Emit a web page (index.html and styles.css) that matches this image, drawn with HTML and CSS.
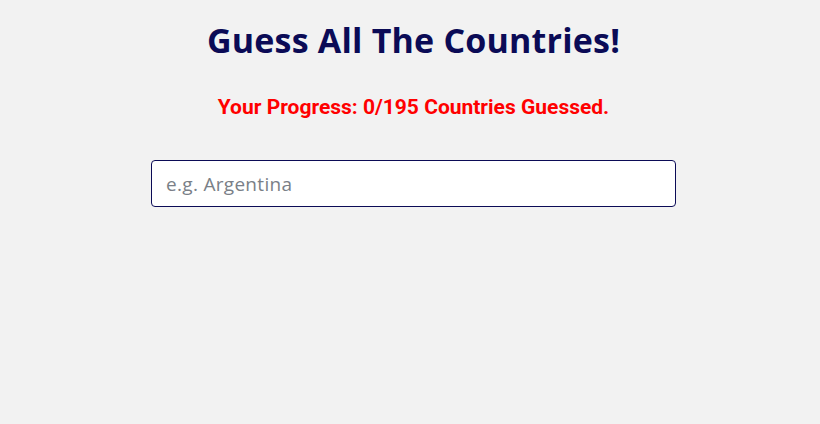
FILE: index.html
```html
<!DOCTYPE html>
<html lang="en">
<head>
<meta charset="utf-8">
<title>Guess All The Countries!</title>
<link rel="stylesheet" href="styles.css">
</head>
<body>
<main class="app">
  <h1 class="title">Guess All The Countries!</h1>
  <p class="progress">Your Progress: 0/195 Countries Guessed.</p>
  <input class="guess" type="text" placeholder="e.g. Argentina">
</main>
</body>
</html>
```

FILE: styles.css
```css
html, body {
  margin: 0;
  padding: 0;
  background: #f2f2f2;
}
.app {
  display: flex;
  flex-direction: column;
  align-items: center;
  padding: 18px 0 0 7px;
  font-family: "Open Sans", Lato, sans-serif;
}
.title {
  margin: 0;
  font-size: 34px;
  font-weight: 700;
  letter-spacing: 0.2px;
  color: #0b0b56;
  line-height: 44px;
}
.progress {
  margin: 33px 0 0;
  font-family: Roboto, sans-serif;
  font-size: 21px;
  font-weight: 700;
  color: #ff0000;
  line-height: 24px;
}
.guess {
  box-sizing: border-box;
  margin-top: 41px;
  width: 525px;
  height: 47px;
  padding: 0 14px;
  border: 1px solid #0b0b56;
  border-radius: 4px;
  background: #fff;
  font-family: "Open Sans", sans-serif;
  font-size: 19px;
  letter-spacing: 0.3px;
  color: #333;
  outline: none;
}
.guess::placeholder {
  color: #7a7f87;
}
```
